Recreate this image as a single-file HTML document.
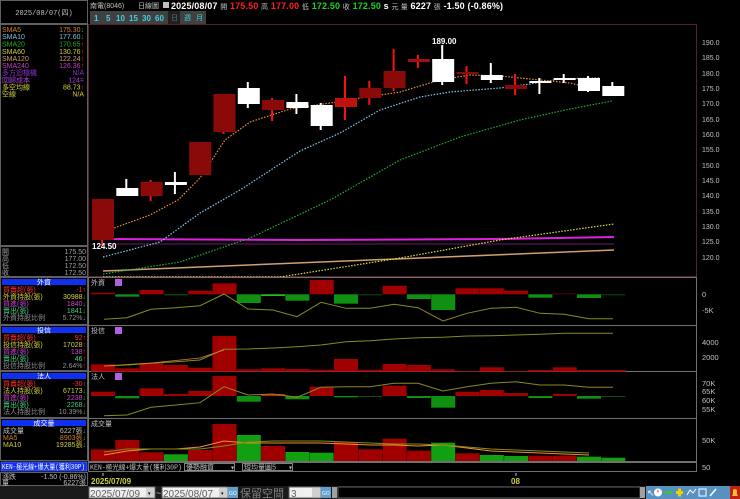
<!DOCTYPE html>
<html><head><meta charset="utf-8"><style>
html,body{margin:0;padding:0;background:#000;width:740px;height:499px;overflow:hidden}
svg{display:block}
text{font-family:"Liberation Sans","WenQuanYi Zen Hei",sans-serif}
.s{font-size:7px}
.m{font-family:"Liberation Mono","WenQuanYi Zen Hei",monospace;font-size:7px}
</style></head><body>
<svg width="740" height="499" viewBox="0 0 740 499" xmlns="http://www.w3.org/2000/svg">
<rect width="740" height="499" fill="#000"/>
<rect x="0.5" y="0.5" width="87" height="23" fill="#000" stroke="#606060"/>
<text x="44" y="15" class="m" fill="#c0c0c0" text-anchor="middle">2025/08/07(四)</text>
<rect x="0.5" y="24.5" width="87" height="221" fill="#000" stroke="#606060"/>
<g class="m">
<text x="2" y="32" fill="#d08030">SMA5</text><text x="84" y="32" fill="#d08030" text-anchor="end">175.30<tspan fill="#20c020">↓</tspan></text>
<text x="2" y="39" fill="#80c0e0">SMA10</text><text x="84" y="39" fill="#80c0e0" text-anchor="end">177.60<tspan fill="#20c020">↓</tspan></text>
<text x="2" y="46.5" fill="#20b020">SMA20</text><text x="84" y="46.5" fill="#20b020" text-anchor="end">170.65<tspan fill="#ff2020">↑</tspan></text>
<text x="2" y="54" fill="#d0d040">SMA60</text><text x="84" y="54" fill="#d0d040" text-anchor="end">130.76<tspan fill="#ff2020">↑</tspan></text>
<text x="2" y="61" fill="#d0a070">SMA120</text><text x="84" y="61" fill="#d0a070" text-anchor="end">122.24<tspan fill="#ff2020">↑</tspan></text>
<text x="2" y="68" fill="#c040c0">SMA240</text><text x="84" y="68" fill="#c040c0" text-anchor="end">126.36<tspan fill="#ff2020">↑</tspan></text>
<text x="2" y="75" fill="#9030d0">多方迴檔機</text><text x="84" y="75" fill="#9030d0" text-anchor="end">N/A</text>
<text x="2" y="82.5" fill="#b040e0">回歸成本</text><text x="84" y="82.5" fill="#b040e0" text-anchor="end">124=</text>
<text x="2" y="89.5" fill="#d0d040">多空均線</text><text x="84" y="89.5" fill="#d0d040" text-anchor="end">88.73<tspan fill="#ff2020">↑</tspan></text>
<text x="2" y="96.5" fill="#d0d040">空線</text><text x="84" y="96.5" fill="#d0d040" text-anchor="end">N/A</text>
</g>
<rect x="0.5" y="246.5" width="87" height="30" fill="#000" stroke="#606060"/>
<g class="m" fill="#a0a0a0">
<text x="2" y="254">開</text><text x="86" y="254" text-anchor="end">175.50</text>
<text x="2" y="261">高</text><text x="86" y="261" text-anchor="end">177.00</text>
<text x="2" y="268">低</text><text x="86" y="268" text-anchor="end">172.50</text>
<text x="2" y="275">收</text><text x="86" y="275" text-anchor="end">172.50</text>
</g>
<rect x="0.5" y="277.5" width="87" height="47" fill="#000" stroke="#606060"/>
<rect x="2" y="279" width="84" height="6" fill="#1030f0"/>
<text x="44" y="284.5" class="m" fill="#fff" text-anchor="middle">外資</text>
<g class="m">
<text x="3" y="292" fill="#ff3030">買賣超(張)</text><text x="86" y="292" fill="#ff3030" text-anchor="end">-1↑</text>
<text x="3" y="299" fill="#d0d040">外資持股(張)</text><text x="86" y="299" fill="#d0d040" text-anchor="end">30988<tspan fill="#20c020">↓</tspan></text>
<text x="3" y="306" fill="#d040d0">買進(張)</text><text x="86" y="306" fill="#d040d0" text-anchor="end">1840<tspan fill="#20c020">↓</tspan></text>
<text x="3" y="313" fill="#40d080">賣出(張)</text><text x="86" y="313" fill="#40d080" text-anchor="end">1841<tspan fill="#20c020">↓</tspan></text>
<text x="3" y="320" fill="#909090">外資持股比例</text><text x="86" y="320" fill="#909090" text-anchor="end">5.72%↓</text>
</g>
<rect x="0.5" y="325.5" width="87" height="45" fill="#000" stroke="#606060"/>
<rect x="2" y="327" width="84" height="6" fill="#1030f0"/>
<text x="44" y="332.5" class="m" fill="#fff" text-anchor="middle">投信</text>
<g class="m">
<text x="3" y="340" fill="#ff3030">買賣超(張)</text><text x="86" y="340" fill="#ff3030" text-anchor="end">92↑</text>
<text x="3" y="347" fill="#d0d040">投信持股(張)</text><text x="86" y="347" fill="#d0d040" text-anchor="end">17028<tspan fill="#ff2020">↑</tspan></text>
<text x="3" y="354" fill="#d040d0">買進(張)</text><text x="86" y="354" fill="#d040d0" text-anchor="end">138<tspan fill="#ff2020">↑</tspan></text>
<text x="3" y="361" fill="#40d080">賣出(張)</text><text x="86" y="361" fill="#40d080" text-anchor="end">46<tspan fill="#ff2020">↑</tspan></text>
<text x="3" y="368" fill="#909090">投信持股比例</text><text x="86" y="368" fill="#909090" text-anchor="end">2.64%<tspan fill="#ff2020">↑</tspan></text>
</g>
<rect x="0.5" y="371.5" width="87" height="46" fill="#000" stroke="#606060"/>
<rect x="2" y="373" width="84" height="6" fill="#1030f0"/>
<text x="44" y="378.5" class="m" fill="#fff" text-anchor="middle">法人</text>
<g class="m">
<text x="3" y="386" fill="#ff3030">買賣超(張)</text><text x="86" y="386" fill="#ff3030" text-anchor="end">-30↑</text>
<text x="3" y="393" fill="#d0d040">法人持股(張)</text><text x="86" y="393" fill="#d0d040" text-anchor="end">67173<tspan fill="#20c020">↓</tspan></text>
<text x="3" y="400" fill="#d040d0">買進(張)</text><text x="86" y="400" fill="#d040d0" text-anchor="end">2238<tspan fill="#20c020">↓</tspan></text>
<text x="3" y="407" fill="#40d080">賣出(張)</text><text x="86" y="407" fill="#40d080" text-anchor="end">2268<tspan fill="#20c020">↓</tspan></text>
<text x="3" y="414" fill="#909090">法人持股比例</text><text x="86" y="414" fill="#909090" text-anchor="end">10.39%↓</text>
</g>
<rect x="0.5" y="418.5" width="87" height="42" fill="#000" stroke="#606060"/>
<rect x="2" y="420" width="84" height="6" fill="#1030f0"/>
<text x="44" y="425.5" class="m" fill="#fff" text-anchor="middle">成交量</text>
<g class="m">
<text x="3" y="433" fill="#c0c0c0">成交量</text><text x="86" y="433" fill="#c0c0c0" text-anchor="end">6227張<tspan fill="#20c020">↓</tspan></text>
<text x="3" y="440" fill="#d08030">MA5</text><text x="86" y="440" fill="#d08030" text-anchor="end">8903張<tspan fill="#20c020">↓</tspan></text>
<text x="3" y="447" fill="#d0d040">MA10</text><text x="86" y="447" fill="#d0d040" text-anchor="end">19285張<tspan fill="#20c020">↓</tspan></text>
</g>
<rect x="1" y="462" width="86" height="9" fill="#1030f0" stroke="#8090ff" stroke-width="0.5"/>
<text x="2" y="469" class="m" fill="#fff" textLength="83" lengthAdjust="spacingAndGlyphs">KEN-極光線+爆大量(獲利30P)</text>
<rect x="0.5" y="472.5" width="87" height="13" fill="#000" stroke="#606060"/>
<g class="m" fill="#c0c0c0"><text x="2" y="479">漲跌</text><text x="86" y="479" text-anchor="end">-1.50 (-0.86%)</text><text x="2" y="485">量</text><text x="86" y="485" text-anchor="end">6227張</text></g>

<g class="m" fill="#c0c0c0">
<text x="90" y="8">南電(8046)</text><text x="138" y="8">日線圖</text>
</g>
<rect x="163" y="2" width="6" height="6" fill="#c0c0c0"/>
<text x="171" y="9" font-size="9" font-weight="bold" fill="#fff" textLength="332" lengthAdjust="spacing">2025/08/07 <tspan font-size="7" font-weight="normal" fill="#c0c0c0">開</tspan> <tspan fill="#ff2020">175.50</tspan> <tspan font-size="7" font-weight="normal" fill="#c0c0c0">高</tspan> <tspan fill="#ff2020">177.00</tspan> <tspan font-size="7" font-weight="normal" fill="#c0c0c0">低</tspan> <tspan fill="#20d020">172.50</tspan> <tspan font-size="7" font-weight="normal" fill="#c0c0c0">收</tspan> <tspan fill="#20d020">172.50</tspan> s <tspan font-size="7" font-weight="normal" fill="#c0c0c0">元  量</tspan> 6227 <tspan font-size="7" font-weight="normal" fill="#c0c0c0">張</tspan>  -1.50 (-0.86%)</text>
<rect x="90" y="11" width="116" height="13" fill="#404040"/>
<g font-size="8" fill="#40d0e0" font-weight="bold">
<text x="94" y="21">1</text><text x="106" y="21">5</text><text x="116" y="21">10</text><text x="129" y="21">15</text><text x="142" y="21">30</text><text x="155" y="21">60</text>
</g>
<rect x="168" y="11" width="12" height="13" fill="#202020"/>
<text x="171" y="20" class="m" fill="#707070">日</text><text x="184" y="20" class="m" fill="#40d0e0">週</text><text x="196" y="20" class="m" fill="#40d0e0">月</text>

<rect x="88.5" y="24.5" width="608" height="252" fill="none" stroke="#5a2030"/>
<g class="s" fill="#c0c0c0" font-size="7.5">
<text x="702" y="45">190.0</text><text x="702" y="60">185.0</text><text x="702" y="76">180.0</text><text x="702" y="91">175.0</text><text x="702" y="106">170.0</text><text x="702" y="122">165.0</text><text x="702" y="137">160.0</text><text x="702" y="152">155.0</text><text x="702" y="168">150.0</text><text x="702" y="183">145.0</text><text x="702" y="198">140.0</text><text x="702" y="214">135.0</text><text x="702" y="229">130.0</text><text x="702" y="244">125.0</text><text x="702" y="260">120.0</text>
</g>
<polyline points="103,239 300,240 500,239 614,237" fill="none" stroke="#e020e0" stroke-width="2"/>
<line x1="103" y1="244" x2="614" y2="244" stroke="#6a1a6a" stroke-width="1"/>
<polyline points="103,271 614,250" fill="none" stroke="#d0a070" stroke-width="1.5"/>
<polyline points="103,277 280,277 400,258 500,240 614,224" fill="none" stroke="#e0e040" stroke-width="1.2" stroke-dasharray="1.5,1.5"/>
<polyline points="103,274 180,262 250,238 330,200 400,160 460,137 520,120 570,109 612,101" fill="none" stroke="#20b030" stroke-width="1.2" stroke-dasharray="1.5,1.5"/>
<polyline points="103,257 160,242 200,213 240,190 300,151 340,133 380,110 420,97 450,92 500,88 530,84 560,79 600,78" fill="none" stroke="#80c8f0" stroke-width="1.2" stroke-dasharray="1.5,1.5"/>
<polyline points="103,232 150,215 178,200 200,178 225,140 250,122 290,109 330,103 360,98 400,92 440,80 470,75 500,76 540,80 570,83 600,90" fill="none" stroke="#f09030" stroke-width="1.2" stroke-dasharray="1.5,1.5"/>
<g>
<line x1="102" y1="240" x2="102" y2="245" stroke="#ff1010" stroke-width="2"/><rect x="92" y="199" width="22" height="41" fill="#8a0a0a"/>
<line x1="126.3" y1="179" x2="126.3" y2="196" stroke="#fff" stroke-width="2"/><rect x="116.3" y="188" width="22" height="8" fill="#fff"/>
<line x1="150.6" y1="180" x2="150.6" y2="201" stroke="#ff1010" stroke-width="2"/><rect x="140.6" y="182" width="22" height="14" fill="#8a0a0a"/>
<line x1="174.9" y1="172" x2="174.9" y2="194" stroke="#fff" stroke-width="2"/><rect x="164.9" y="182" width="22" height="3" fill="#fff"/>
<rect x="189.2" y="142" width="22" height="33" fill="#8a0a0a"/>
<line x1="223.5" y1="130" x2="223.5" y2="134" stroke="#ff1010" stroke-width="2"/><rect x="213.5" y="94" width="22" height="38" fill="#8a0a0a"/>
<line x1="247.8" y1="82" x2="247.8" y2="108" stroke="#fff" stroke-width="2"/><rect x="237.8" y="88" width="22" height="16" fill="#fff"/>
<line x1="272.1" y1="98" x2="272.1" y2="121" stroke="#ff1010" stroke-width="2"/><rect x="262.1" y="100" width="22" height="10" fill="#8a0a0a"/>
<line x1="296.4" y1="94" x2="296.4" y2="114" stroke="#fff" stroke-width="2"/><rect x="286.4" y="102" width="22" height="6" fill="#fff"/>
<line x1="320.7" y1="103" x2="320.7" y2="130" stroke="#fff" stroke-width="2"/><rect x="310.7" y="105" width="22" height="21" fill="#fff"/>
<line x1="345" y1="76" x2="345" y2="120" stroke="#ff1010" stroke-width="2"/><rect x="335" y="98" width="22" height="9" fill="#c01010"/>
<line x1="369.3" y1="81" x2="369.3" y2="105" stroke="#ff1010" stroke-width="2"/><rect x="359.3" y="88" width="22" height="10" fill="#8a0a0a"/>
<line x1="393.6" y1="49" x2="393.6" y2="91" stroke="#ff1010" stroke-width="2"/><rect x="383.6" y="71" width="22" height="17" fill="#8a0a0a"/>
<line x1="417.9" y1="55" x2="417.9" y2="68" stroke="#ff1010" stroke-width="2"/><rect x="407.9" y="59" width="22" height="3" fill="#a01010"/>
<line x1="442.2" y1="45" x2="442.2" y2="85" stroke="#fff" stroke-width="2"/><rect x="432.2" y="59" width="22" height="23" fill="#fff"/>
<line x1="466.5" y1="66" x2="466.5" y2="84" stroke="#ff1010" stroke-width="2"/><rect x="456.5" y="72" width="22" height="2" fill="#8a0a0a"/>
<line x1="490.8" y1="63" x2="490.8" y2="83" stroke="#fff" stroke-width="2"/><rect x="480.8" y="75" width="22" height="5" fill="#fff"/>
<line x1="515.1" y1="74" x2="515.1" y2="95" stroke="#ff1010" stroke-width="2"/><rect x="505.1" y="85" width="22" height="4" fill="#8a0a0a"/>
<line x1="539.4" y1="78" x2="539.4" y2="94" stroke="#fff" stroke-width="2"/><rect x="529.4" y="81" width="22" height="2" fill="#fff"/>
<line x1="563.7" y1="74" x2="563.7" y2="83" stroke="#fff" stroke-width="2"/><rect x="553.7" y="78" width="22" height="2" fill="#fff"/>
<line x1="588" y1="76" x2="588" y2="92" stroke="#fff" stroke-width="2"/><rect x="578" y="78" width="22" height="13" fill="#fff"/>
<line x1="612.3" y1="82" x2="612.3" y2="96" stroke="#fff" stroke-width="2"/><rect x="602.3" y="86" width="22" height="10" fill="#fff"/>
</g>
<text x="432" y="44" font-size="8" fill="#fff" font-weight="bold">189.00</text>
<text x="92" y="249" font-size="8" fill="#fff" font-weight="bold">124.50</text>

<g fill="none" stroke="#707070">
<rect x="88.5" y="277.5" width="608" height="48"/>
<rect x="88.5" y="325.5" width="608" height="46"/>
<rect x="88.5" y="371.5" width="608" height="47"/>
<rect x="88.5" y="418.5" width="608" height="43"/>
</g>
<g class="m" fill="#c0c0c0">
<text x="91" y="285">外資</text><text x="91" y="333">投信</text><text x="91" y="379">法人</text><text x="91" y="426">成交量</text>
</g>
<rect x="115" y="279" width="7" height="7" fill="#b060e0"/><rect x="115" y="327" width="7" height="7" fill="#b060e0"/><rect x="115" y="373" width="7" height="7" fill="#b060e0"/>
<g font-size="7.5" fill="#c0c0c0">
<text x="702" y="297">0</text><text x="702" y="313">-5K</text>
<text x="702" y="345">4000</text><text x="702" y="360">2000</text>
<text x="702" y="386">70K</text><text x="702" y="394">65K</text><text x="702" y="403">60K</text><text x="702" y="412">55K</text>
<text x="702" y="443">50K</text><text x="702" y="470">50</text>
</g>
<g>
<rect x="91" y="292.7" width="24" height="1.6" fill="#a00000"/>
<rect x="115.3" y="294.3" width="24" height="2.4" fill="#109010"/>
<rect x="139.6" y="290" width="24" height="4.3" fill="#a00000"/>
<rect x="163.9" y="294.3" width="24" height="1" fill="#0a600a"/>
<rect x="188.2" y="290.7" width="24" height="3.6" fill="#a00000"/>
<rect x="212.5" y="283.3" width="24" height="11" fill="#a00000"/>
<rect x="236.8" y="294.3" width="24" height="8.7" fill="#109010"/>
<rect x="261.1" y="294.3" width="24" height="1.7" fill="#20c020"/>
<rect x="285.4" y="294.3" width="24" height="6.4" fill="#109010"/>
<rect x="309.7" y="280" width="24" height="14.3" fill="#a00000"/>
<rect x="334" y="294.3" width="24" height="9.4" fill="#109010"/>
<rect x="358.3" y="294.3" width="24" height="1" fill="#0a500a"/>
<rect x="382.6" y="285.7" width="24" height="8.6" fill="#a00000"/>
<rect x="406.9" y="294.3" width="24" height="4.7" fill="#109010"/>
<rect x="431.2" y="294.3" width="24" height="15.7" fill="#109010"/>
<rect x="455.5" y="288.3" width="24" height="6" fill="#a00000"/>
<rect x="479.8" y="288.3" width="24" height="6" fill="#a00000"/>
<rect x="504.1" y="290.7" width="24" height="3.6" fill="#a00000"/>
<rect x="528.4" y="294.3" width="24" height="3.4" fill="#109010"/>
<rect x="552.7" y="293.3" width="24" height="1" fill="#600000"/>
<rect x="577" y="294.3" width="24" height="3.7" fill="#109010"/>
<rect x="601.3" y="294.3" width="24" height="1" fill="#0a500a"/>
<polyline points="104,319.3 127,317.7 151,309.3 176,307.7 200,305.7 224,294 248,309 273,310 297,316.7 321,302.3 346,308.3 370,308.3 394,304.3 418,307.7 443,321 467,313.3 491,308.3 516,307.3 540,313.3 564,314.3 589,318.7 613,318.7" fill="none" stroke="#8a8a20" stroke-width="1"/>
</g>
<g fill="#a00000">
<rect x="91" y="364.3" width="24" height="7.4"/><rect x="115.3" y="368.3" width="24" height="3.4"/><rect x="139.6" y="363.3" width="24" height="8.4"/><rect x="163.9" y="365" width="24" height="6.7"/><rect x="188.2" y="367.7" width="24" height="4"/><rect x="212.5" y="336" width="24" height="35.7"/><rect x="236.8" y="369.3" width="24" height="2.4"/><rect x="261.1" y="368.3" width="24" height="3.4"/><rect x="285.4" y="369" width="24" height="2.7"/><rect x="309.7" y="369.7" width="24" height="2"/><rect x="334" y="359" width="24" height="12.7"/><rect x="358.3" y="369.7" width="24" height="2"/><rect x="382.6" y="364" width="24" height="7.7"/><rect x="406.9" y="365" width="24" height="6.7"/><rect x="431.2" y="369.3" width="24" height="2.4"/><rect x="455.5" y="371" width="24" height="0.7"/><rect x="479.8" y="367.3" width="24" height="4.4"/><rect x="504.1" y="371" width="24" height="0.7"/><rect x="528.4" y="370" width="24" height="1.7"/><rect x="552.7" y="367.3" width="24" height="4.4"/><rect x="577" y="370" width="24" height="1.7"/><rect x="601.3" y="370" width="24" height="1.7"/>
</g>
<polyline points="104,366 127,365 151,363.3 176,361.7 200,360 224,349.3 248,349 273,348 297,346.7 321,345 346,341.7 370,340.7 394,339 418,337.7 443,337.3 467,336 491,335.7 516,335 540,334.3 564,333.3 589,333.3 613,333.3" fill="none" stroke="#8a8a20" stroke-width="1"/>
<polyline points="104,366 151,363 200,358 224,350" fill="none" stroke="#d08030" stroke-width="0.8"/>
<g>
<rect x="91" y="391.7" width="24" height="4.3" fill="#a00000"/>
<rect x="115.3" y="396" width="24" height="2.3" fill="#109010"/>
<rect x="139.6" y="388.3" width="24" height="7.7" fill="#a00000"/>
<rect x="163.9" y="394" width="24" height="2" fill="#a00000"/>
<rect x="188.2" y="391" width="24" height="5" fill="#a00000"/>
<rect x="212.5" y="376" width="24" height="20" fill="#a00000"/>
<rect x="236.8" y="396" width="24" height="5.7" fill="#109010"/>
<rect x="261.1" y="394" width="24" height="2" fill="#c02010"/>
<rect x="285.4" y="396" width="24" height="3.3" fill="#109010"/>
<rect x="309.7" y="386.7" width="24" height="9.3" fill="#a00000"/>
<rect x="334" y="396" width="24" height="1.3" fill="#109010"/>
<rect x="358.3" y="396" width="24" height="1" fill="#0a500a"/>
<rect x="382.6" y="385.7" width="24" height="10.3" fill="#a00000"/>
<rect x="406.9" y="396" width="24" height="2" fill="#109010"/>
<rect x="431.2" y="396" width="24" height="11.7" fill="#109010"/>
<rect x="455.5" y="391.7" width="24" height="4.3" fill="#a00000"/>
<rect x="479.8" y="390" width="24" height="6" fill="#a00000"/>
<rect x="504.1" y="393" width="24" height="3" fill="#a00000"/>
<rect x="528.4" y="396" width="24" height="2" fill="#109010"/>
<rect x="552.7" y="394" width="24" height="2" fill="#a00000"/>
<rect x="577" y="396" width="24" height="2.7" fill="#109010"/>
<rect x="601.3" y="396" width="24" height="1" fill="#0a500a"/>
</g>
<polyline points="104,415.7 127,415 151,407.3 176,405 200,402.7 224,386.7 248,395 273,394 297,397.3 321,387.3 346,386.7 370,386.7 394,383.3 418,383.3 443,391 467,386.7 491,383.3 516,381.7 540,385 564,385 589,387.3 613,387.3" fill="none" stroke="#8a8a20" stroke-width="1"/>
<g>
<rect x="91" y="449.3" width="24" height="11.7" fill="#a00000"/>
<rect x="115.3" y="440" width="24" height="21" fill="#a00000"/>
<rect x="139.6" y="452.3" width="24" height="8.7" fill="#a00000"/>
<rect x="163.9" y="454.3" width="24" height="6.7" fill="#10a010"/>
<rect x="188.2" y="450" width="24" height="11" fill="#a00000"/>
<rect x="212.5" y="424" width="24" height="37" fill="#a00000"/>
<rect x="236.8" y="435" width="24" height="26" fill="#10a010"/>
<rect x="261.1" y="446" width="24" height="15" fill="#a00000"/>
<rect x="285.4" y="452" width="24" height="9" fill="#10a010"/>
<rect x="309.7" y="452.7" width="24" height="8.3" fill="#10a010"/>
<rect x="334" y="442" width="24" height="19" fill="#a00000"/>
<rect x="358.3" y="449.3" width="24" height="11.7" fill="#a00000"/>
<rect x="382.6" y="438.7" width="24" height="22.3" fill="#a00000"/>
<rect x="406.9" y="450.7" width="24" height="10.3" fill="#a00000"/>
<rect x="431.2" y="442.7" width="24" height="18.3" fill="#10a010"/>
<rect x="455.5" y="453.3" width="24" height="7.7" fill="#a00000"/>
<rect x="479.8" y="455" width="24" height="6" fill="#10a010"/>
<rect x="504.1" y="456" width="24" height="5" fill="#10a010"/>
<rect x="528.4" y="455.7" width="24" height="5.3" fill="#a00000"/>
<rect x="552.7" y="455.7" width="24" height="5.3" fill="#a00000"/>
<rect x="577" y="456.7" width="24" height="4.3" fill="#10a010"/>
<rect x="601.3" y="457.7" width="24" height="3.3" fill="#10a010"/>
</g>
<polyline points="104,455 127,451 151,449 176,449 200,447 224,441 248,443 273,443 297,443 321,443 346,444 370,445 394,445 418,446 443,445 467,448 491,451 516,452 540,453 564,454 589,455" fill="none" stroke="#f09030" stroke-width="1"/>
<polyline points="104,452 127,449 151,449 176,449 200,449 224,446 248,442 273,441 297,441 321,441 346,442 370,443 394,444 418,444 443,445 467,447 491,449 516,450 540,451 564,452 589,453" fill="none" stroke="#8a8a20" stroke-width="1"/>

<rect x="88.5" y="462.5" width="608" height="9" fill="#000" stroke="#707070"/>
<text x="90" y="469.5" class="m" fill="#c0c0c0" textLength="92" lengthAdjust="spacingAndGlyphs">KEN-極光線+爆大量(獲利30P)</text>
<rect x="184.5" y="463.5" width="50" height="7" fill="#000" stroke="#808080"/><text x="186" y="469.5" class="m" fill="#c0c0c0">優勢融資</text><text x="231" y="469.5" font-size="6" fill="#c0c0c0">▾</text>
<rect x="242.5" y="463.5" width="50" height="7" fill="#000" stroke="#808080"/><text x="244" y="469.5" class="m" fill="#c0c0c0">短均量圖5</text><text x="289" y="469.5" font-size="6" fill="#c0c0c0">▾</text>
<line x1="103" y1="473" x2="103" y2="476" stroke="#c0c0c0"/><line x1="516" y1="473" x2="516" y2="476" stroke="#c0c0c0"/>
<text x="91" y="484" font-size="8" fill="#d0d040" font-weight="bold">2025/07/09</text>
<text x="511" y="484" font-size="8" fill="#d0d040" font-weight="bold">08</text>
<rect x="0" y="486" width="740" height="13" fill="#1a1a1a"/>
<rect x="89" y="487" width="66" height="11" fill="#f0f0f0" stroke="#606060"/>
<text x="90" y="497" font-size="10" fill="#606060" font-family="Liberation Serif,serif">2025/07/09</text>
<rect x="146" y="488" width="8" height="9" fill="#d0d0d0"/><text x="148" y="495" font-size="5" fill="#000">▾</text>
<text x="156" y="496" font-size="9" fill="#c0c0c0">~</text>
<rect x="162" y="487" width="66" height="11" fill="#f0f0f0" stroke="#606060"/>
<text x="163" y="497" font-size="10" fill="#606060" font-family="Liberation Serif,serif">2025/08/07</text>
<rect x="219" y="488" width="8" height="9" fill="#d0d0d0"/><text x="221" y="495" font-size="5" fill="#000">▾</text>
<rect x="228" y="487" width="10" height="11" fill="#60a0d0"/><text x="229" y="495" font-size="5" fill="#fff">GO</text>
<text x="240" y="497" font-size="11" fill="#808080" font-family="WenQuanYi Zen Hei,sans-serif">保留空間</text>
<rect x="289" y="487" width="32" height="11" fill="#f0f0f0" stroke="#606060"/>
<text x="291" y="497" font-size="10" fill="#606060" font-family="Liberation Serif,serif">3</text>
<rect x="312" y="488" width="8" height="9" fill="#d0d0d0"/>
<rect x="321" y="487" width="10" height="11" fill="#60a0d0"/><text x="322" y="495" font-size="5" fill="#fff">GO</text>
<rect x="332" y="487" width="5" height="11" fill="#a0a0a0"/>
<rect x="338" y="487" width="302" height="11" fill="#000" stroke="#606060"/>
<rect x="640" y="487" width="5" height="11" fill="#a0a0a0"/>
<rect x="646" y="486" width="84" height="13" fill="#5890c0"/>
<g fill="#fff" font-size="9"><text x="647" y="496">↖</text></g>
<circle cx="658" cy="492.5" r="4" fill="#fff"/><line x1="658" y1="492.5" x2="658" y2="490" stroke="#e04000"/>
<rect x="665" y="491" width="7" height="3" fill="#40c040"/>
<rect x="676" y="491" width="7" height="3" fill="#f0d000"/><rect x="678" y="488.5" width="3" height="8" fill="#f0d000"/>
<path d="M687 495 l3-5 3 3 3-4" stroke="#fff" fill="none"/>
<rect x="699" y="489" width="7" height="7" fill="none" stroke="#fff"/>
<line x1="710" y1="496" x2="716" y2="489" stroke="#fff" stroke-width="1.5"/>
<rect x="730" y="486" width="10" height="13" fill="#c02010"/><path d="M732 496 h6 l-1-2 v-3 a2 2 0 0 0 -4 0 v3z" fill="#f0c030"/>
</svg>
</body></html>
